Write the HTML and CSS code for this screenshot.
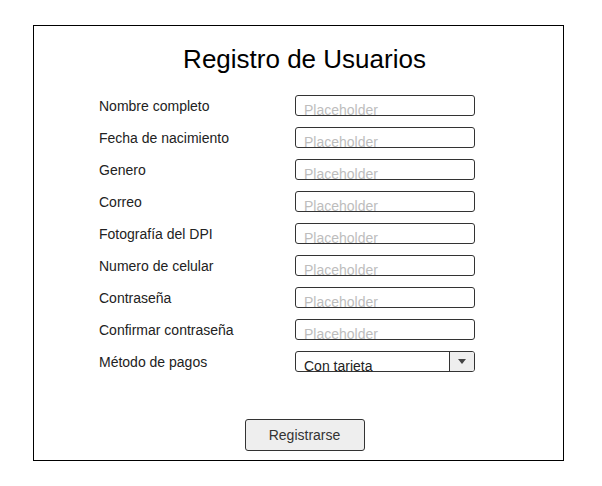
FILE: index.html
```html
<!DOCTYPE html>
<html lang="es">
<head>
<meta charset="utf-8">
<title>Registro de Usuarios</title>
<link rel="stylesheet" href="styles.css">
</head>
<body>
<div class="card">
  <h1 class="title">Registro de Usuarios</h1>
  <div class="form">
    <div class="row"><span class="label">Nombre completo</span><div class="field"><span class="ph">Placeholder</span></div></div>
    <div class="row"><span class="label">Fecha de nacimiento</span><div class="field"><span class="ph">Placeholder</span></div></div>
    <div class="row"><span class="label">Genero</span><div class="field"><span class="ph">Placeholder</span></div></div>
    <div class="row"><span class="label">Correo</span><div class="field"><span class="ph">Placeholder</span></div></div>
    <div class="row"><span class="label">Fotografía del DPI</span><div class="field"><span class="ph">Placeholder</span></div></div>
    <div class="row"><span class="label">Numero de celular</span><div class="field"><span class="ph">Placeholder</span></div></div>
    <div class="row"><span class="label">Contraseña</span><div class="field"><span class="ph">Placeholder</span></div></div>
    <div class="row"><span class="label">Confirmar contraseña</span><div class="field"><span class="ph">Placeholder</span></div></div>
    <div class="row"><span class="label">Método de pagos</span>
      <div class="field select"><span class="val">Con tarjeta</span><span class="arrow"><span class="tri"></span></span></div>
    </div>
  </div>
  <div class="actions"><button class="btn" type="button">Registrarse</button></div>
</div>
</body>
</html>
```
FILE: styles.css
```css
html, body { margin: 0; padding: 0; background: #fff; }
body { font-family: "Liberation Sans", Arial, sans-serif; color: #222; }
.card {
  margin: 25px 0 0 33px;
  width: 529px;
  border: 1px solid #000;
  padding: 18px 0 9px 0;
  box-sizing: content-box;
}
.title {
  margin: 0;
  font-weight: normal;
  font-size: 26px;
  line-height: 30px;
  color: #000;
  text-align: center;
  padding-left: 12px;
}
.form {
  margin-top: 21px;
  padding-left: 65px;
  display: flex;
  flex-direction: column;
  gap: 11px;
}
.row {
  display: flex;
  align-items: center;
  height: 21px;
}
.label {
  width: 196px;
  font-size: 14px;
  line-height: 16px;
  color: #222;
}
.field {
  position: relative;
  width: 180px;
  height: 21px;
  box-sizing: border-box;
  border: 1px solid #333;
  border-radius: 3px;
  padding: 6px 0 0 8px;
  overflow: hidden;
  font-size: 14px;
  line-height: 16px;
  white-space: nowrap;
}
.ph { color: #bdbdbd; }
.val { color: #222; }
.select { display: flex; padding-right: 0; }
.select .val { flex: 1; }
.arrow {
  position: absolute;
  top: 0; right: 0; bottom: 0;
  width: 24px;
  background: #eee;
  border-left: 1px solid #333;
  display: flex;
  align-items: center;
  justify-content: center;
}
.tri {
  width: 0; height: 0;
  border-left: 4px solid transparent;
  border-right: 4px solid transparent;
  border-top: 5px solid #444;
}
.actions {
  margin-top: 47px;
  display: flex;
  justify-content: center;
  padding-left: 12px;
}
.btn {
  width: 120px;
  height: 32px;
  background: #eee;
  border: 1px solid #333;
  border-radius: 3px;
  font-family: "Liberation Sans", Arial, sans-serif;
  font-size: 14px;
  color: #333;
  padding: 0;
}
```
